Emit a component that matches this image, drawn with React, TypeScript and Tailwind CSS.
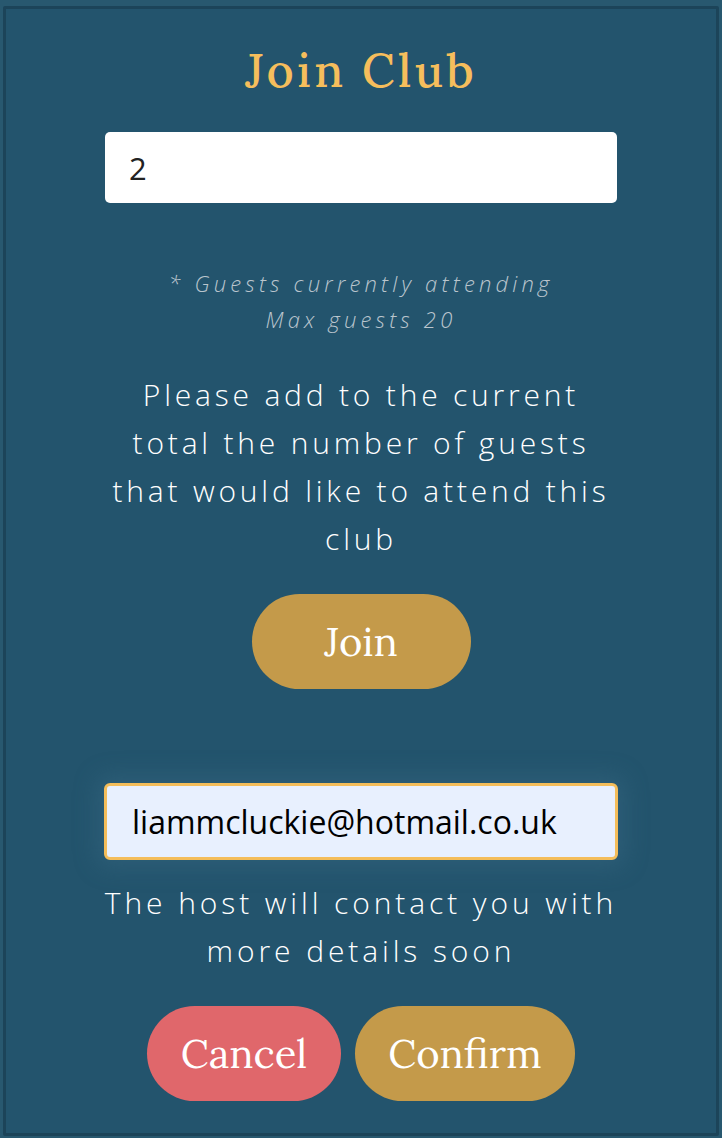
import React, { useState } from 'react';

const serif = "font-['Lora','DejaVu_Serif','Liberation_Serif',serif]";
const sans = "font-['Open_Sans','Noto_Sans',sans-serif]";

const App: React.FC = () => {
    const [guests, setGuests] = useState('2');
    const [email, setEmail] = useState('liammcluckie@hotmail.co.uk');

    return (
        <div className="min-h-[1138px] w-[722px] bg-[#28586f] pt-[6px] pl-[3px]">
            <div className="w-[716px] h-[1130px] border-[3px] border-[#1c4459] bg-[#23546d] rounded-[2px] flex flex-col items-center pt-[31px]">
                {/* Heading */}
                <h1 className={`${serif} text-[47px] leading-[60px] tracking-[0.07em] font-medium text-[#f6be5c]`}>
                    Join Club
                </h1>

                <input
                    type="number"
                    value={guests}
                    onChange={e => setGuests(e.target.value)}
                    className={`${sans} mt-[32px] w-[512px] h-[71px] bg-white rounded-[5px] pl-[24px] text-[31px] text-[#222] outline-none`}
                />

                <div className={`${sans} mt-[62px] text-center italic text-[22px] leading-[36px] tracking-[4.2px] text-[#bac5cd] font-light`}>
                    <p>* Guests currently attending</p>
                    <p>Max guests 20</p>
                </div>

                <p className={`${sans} mt-[34px] w-[514px] text-center text-[30px] leading-[48px] tracking-[3.8px] text-white font-light`}>
                    Please add to the current total the number of guests that would like to attend this club
                </p>

                <button className={`${serif} mt-[31px] w-[219px] h-[95px] rounded-full bg-[#c49a4a] text-white text-[40px]`}>
                    Join
                </button>

                {/* Email */}
                <div className="mt-[94px] rounded-[6px] shadow-[0_0_22px_8px_rgba(62,112,138,0.35)]">
                    <input
                        type="email"
                        value={email}
                        onChange={e => setEmail(e.target.value)}
                        className={`${sans} block w-[514px] h-[77px] bg-[#e8f0fe] border-[3px] border-[#f4bd5a] rounded-[6px] pl-[25px] text-[32px] text-black outline-none`}
                    />
                </div>

                <p className={`${sans} mt-[19px] w-[530px] text-center text-[30px] leading-[48px] tracking-[3.9px] text-white font-light`}>
                    The host will contact you with more details soon
                </p>

                <div className="mt-[31px] flex gap-[14px]">
                    <button className={`${serif} w-[194px] h-[95px] rounded-full bg-[#e0676b] text-white text-[40px]`}>
                        Cancel
                    </button>
                    <button className={`${serif} w-[220px] h-[95px] rounded-full bg-[#c49a4a] text-white text-[40px]`}>
                        Confirm
                    </button>
                </div>
            </div>
        </div>
    );
};

export default App;
